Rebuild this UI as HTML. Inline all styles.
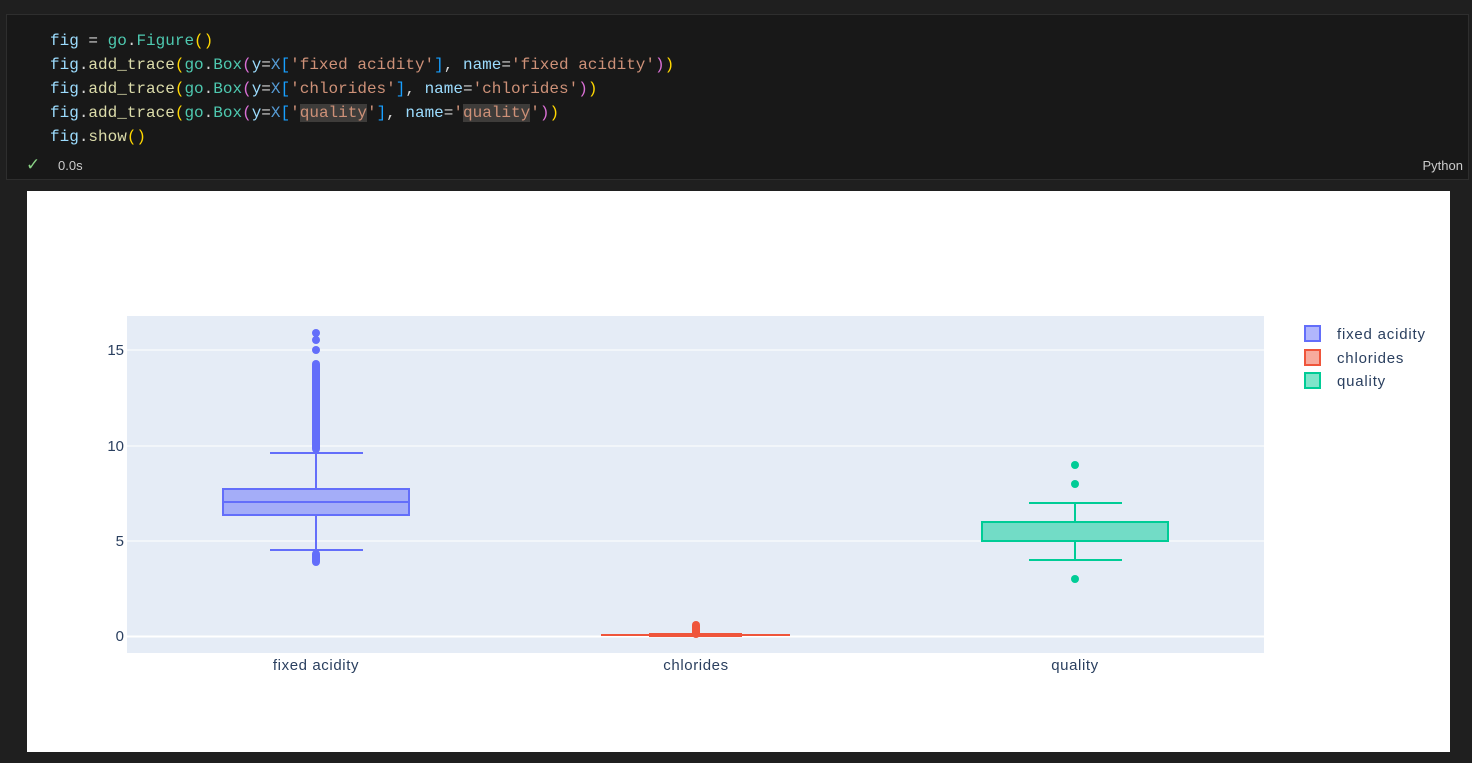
<!DOCTYPE html>
<html><head><style>
body{margin:0;width:1472px;height:763px;background:#1f1f1f;position:relative;overflow:hidden;font-family:"Liberation Sans",sans-serif}
.cell{position:absolute;left:6px;top:14px;width:1461px;height:164px;background:#181818;border:1px solid #2e2e2e}
.code{position:absolute;left:50px;top:29px;font-family:"Liberation Mono",monospace;font-size:16px;line-height:24px;color:#9cdcfe;white-space:pre}
.f{color:#dcdcaa}.g{color:#4ec9b0}.s{color:#ce9178}.y{color:#ffd700}.p{color:#da70d6}.b{color:#179fff}.w{color:#d4d4d4}.c{color:#569cd6}
.hl{background:#3e3c3a}
</style></head><body>
<div class="cell"></div>
<div class="code"><span>fig</span><span class="w"> = </span><span class="g">go</span><span class="w">.</span><span class="g">Figure</span><span class="y">()</span>
<span>fig</span><span class="w">.</span><span class="f">add_trace</span><span class="y">(</span><span class="g">go</span><span class="w">.</span><span class="g">Box</span><span class="p">(</span>y<span class="w">=</span><span class="c">X</span><span class="b">[</span><span class="s">'fixed acidity'</span><span class="b">]</span><span class="w">, </span>name<span class="w">=</span><span class="s">'fixed acidity'</span><span class="p">)</span><span class="y">)</span>
<span>fig</span><span class="w">.</span><span class="f">add_trace</span><span class="y">(</span><span class="g">go</span><span class="w">.</span><span class="g">Box</span><span class="p">(</span>y<span class="w">=</span><span class="c">X</span><span class="b">[</span><span class="s">'chlorides'</span><span class="b">]</span><span class="w">, </span>name<span class="w">=</span><span class="s">'chlorides'</span><span class="p">)</span><span class="y">)</span>
<span>fig</span><span class="w">.</span><span class="f">add_trace</span><span class="y">(</span><span class="g">go</span><span class="w">.</span><span class="g">Box</span><span class="p">(</span>y<span class="w">=</span><span class="c">X</span><span class="b">[</span><span class="s">'<span class="hl">quality</span>'</span><span class="b">]</span><span class="w">, </span>name<span class="w">=</span><span class="s">'<span class="hl">quality</span>'</span><span class="p">)</span><span class="y">)</span>
<span>fig</span><span class="w">.</span><span class="f">show</span><span class="y">()</span></div>
<div style="position:absolute;left:26px;top:155px;color:#89d185;font-size:17px">✓</div>
<div style="position:absolute;left:58px;top:158px;color:#ccc;font-size:13px">0.0s</div>
<div style="position:absolute;right:9px;top:158px;color:#ccc;font-size:13px">Python</div>
<svg style="position:absolute;left:0;top:0" width="1472" height="763" font-family="Liberation Sans, sans-serif">
<rect x="27" y="191" width="1423" height="561" fill="#fff"/>
<rect x="127" y="316" width="1137" height="337" fill="#e5ecf6"/>
<g stroke="#fff" stroke-width="1"><line x1="127" x2="1264" y1="350" y2="350"/><line x1="127" x2="1264" y1="446" y2="446"/><line x1="127" x2="1264" y1="541" y2="541"/></g>
<line x1="127" x2="1264" y1="636.5" y2="636.5" stroke="#fff" stroke-width="2"/>
<g fill="#2a3f5f" font-size="15" text-anchor="end"><text x="124" y="355">15</text><text x="124" y="451">10</text><text x="124" y="546">5</text><text x="124" y="641">0</text></g>
<g fill="#2a3f5f" font-size="15" letter-spacing="0.6" text-anchor="middle"><text x="316" y="670">fixed acidity</text><text x="696" y="670">chlorides</text><text x="1075" y="670">quality</text></g>
<g stroke="#636efa" stroke-width="2" fill="none">
<line x1="316" x2="316" y1="453" y2="489"/><line x1="316" x2="316" y1="515" y2="550"/>
<line x1="270" x2="363" y1="453" y2="453"/><line x1="270" x2="363" y1="550" y2="550"/>
<rect x="223" y="489" width="186" height="26" fill="rgba(99,110,250,0.5)"/>
<line x1="223" x2="409" y1="502" y2="502"/>
</g>
<g fill="#636efa"><circle cx="316" cy="333" r="4"/><circle cx="316" cy="340" r="4"/><circle cx="316" cy="350" r="4"/><rect x="312" y="360" width="8" height="93" rx="4"/><rect x="312" y="550" width="8" height="16" rx="4"/></g>
<g stroke="#ef553b" fill="#ef553b"><line x1="601" x2="790" y1="635" y2="635" stroke-width="2"/><rect x="649" y="633" width="93" height="4" stroke="none"/><rect x="692" y="621" width="8" height="17" rx="4" stroke="none"/></g>
<g stroke="#00cc96" stroke-width="2" fill="none">
<line x1="1075" x2="1075" y1="503" y2="522"/><line x1="1075" x2="1075" y1="541" y2="560"/>
<line x1="1029" x2="1122" y1="503" y2="503"/><line x1="1029" x2="1122" y1="560" y2="560"/>
<rect x="982" y="522" width="186" height="19" fill="rgba(0,204,150,0.5)"/>
</g>
<g fill="#00cc96"><circle cx="1075" cy="465" r="4"/><circle cx="1075" cy="484" r="4"/><circle cx="1075" cy="579" r="4"/></g>
<rect x="1305" y="326" width="15" height="15" fill="rgba(99,110,250,0.5)" stroke="#636efa" stroke-width="2"/>
<rect x="1305" y="350" width="15" height="15" fill="rgba(239,85,59,0.5)" stroke="#ef553b" stroke-width="2"/>
<rect x="1305" y="373" width="15" height="15" fill="rgba(0,204,150,0.5)" stroke="#00cc96" stroke-width="2"/>
<g fill="#2a3f5f" font-size="15" letter-spacing="0.8"><text x="1337" y="339">fixed acidity</text><text x="1337" y="363">chlorides</text><text x="1337" y="386">quality</text></g>
</svg>
</body></html>
